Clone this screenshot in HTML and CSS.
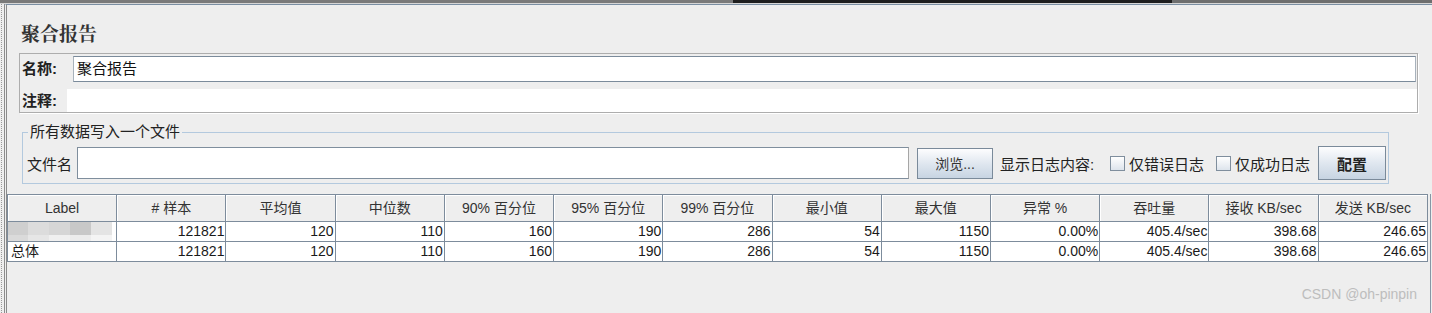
FILE: index.html
```html
<!DOCTYPE html>
<html lang="zh-CN">
<head>
  <meta charset="UTF-8">
  <meta name="viewport" content="width=device-width, initial-scale=1.0">
  <title>聚合报告</title>
  <link rel="stylesheet" href="styles.css">
</head>
<body>
  <div class="topbar"></div>
  <div class="shell">
    <div class="splitter"></div>
    <div class="panel">
      <h1 class="title">聚合报告</h1>

      <div class="namebox">
        <div class="name-row">
          <span class="lbl">名称:</span>
          <div class="field name-field">聚合报告</div>
        </div>
        <div class="note-row">
          <span class="lbl">注释:</span>
          <div class="comment"></div>
        </div>
      </div>

      <fieldset class="filebox">
        <legend>所有数据写入一个文件</legend>
        <div class="file-row">
          <span class="file-lbl">文件名</span>
          <div class="file-input"></div>
          <button class="btn browse">浏览...</button>
          <span class="log-lbl">显示日志内容:</span>
          <span class="check err"><span class="box"></span>仅错误日志</span>
          <span class="check ok"><span class="box"></span>仅成功日志</span>
          <button class="btn config">配置</button>
        </div>
      </fieldset>

      <div class="results">
        <table>
          <thead>
            <tr>
              <th>Label</th>
              <th># 样本</th>
              <th>平均值</th>
              <th>中位数</th>
              <th>90% 百分位</th>
              <th>95% 百分位</th>
              <th>99% 百分位</th>
              <th>最小值</th>
              <th>最大值</th>
              <th>异常 %</th>
              <th>吞吐量</th>
              <th>接收 KB/sec</th>
              <th>发送 KB/sec</th>
            </tr>
          </thead>
          <tbody>
            <tr>
              <td class="label-cell"><div class="blur"><span></span><span></span><span></span><span></span><span></span></div></td>
              <td>121821</td>
              <td>120</td>
              <td>110</td>
              <td>160</td>
              <td>190</td>
              <td>286</td>
              <td>54</td>
              <td>1150</td>
              <td>0.00%</td>
              <td>405.4/sec</td>
              <td>398.68</td>
              <td>246.65</td>
            </tr>
            <tr>
              <td class="label-cell">总体</td>
              <td>121821</td>
              <td>120</td>
              <td>110</td>
              <td>160</td>
              <td>190</td>
              <td>286</td>
              <td>54</td>
              <td>1150</td>
              <td>0.00%</td>
              <td>405.4/sec</td>
              <td>398.68</td>
              <td>246.65</td>
            </tr>
          </tbody>
        </table>
        <div class="watermark">CSDN @oh-pinpin</div>
      </div>
    </div>
  </div>
</body>
</html>
```

FILE: styles.css
```css
body {
  margin: 0;
  height: 313px;
  overflow: hidden;
  background: #eeeeee;
  font-family: "Liberation Sans", "Noto Sans CJK SC", sans-serif;
  color: #222;
}
.topbar {
  height: 3px;
  background: linear-gradient(to right, #7a7a7a 0 733px, #1e1e1e 733px 1172px, #6e6e6e 1172px);
  border-bottom: 1px solid #d6d6d6;
}
.shell {
  display: flex;
  height: 309px;
}
.splitter {
  flex: none;
  width: 2px;
  margin-left: 1px;
  border-left: 1px dotted #999;
}
.panel {
  flex: 1;
  min-width: 0;
  display: flex;
  flex-direction: column;
  border-top: 1px solid #7b8fa3;
  border-left: 3px double #8b8b8b;
}
.title {
  margin: 16px 0 0 14px;
  font-family: "Noto Serif CJK SC", "Noto Sans CJK SC", serif;
  font-size: 19px;
  line-height: 23px;
  font-weight: bold;
  color: #333;
}

/* name / comment */
.namebox {
  margin: 9px 0 0 12px;
  width: 1399px;
  height: 60px;
  box-sizing: border-box;
  border: 1px solid #adadad;
  box-shadow: 1px 1px 0 #fff;
  padding: 2px 0 0 2px;
}
.name-row, .note-row {
  display: flex;
  align-items: center;
}
.name-row {
  height: 26px;
}
.note-row {
  height: 23px;
  margin-top: 7px;
}
.lbl {
  flex: none;
  width: 51px;
  font-size: 15px;
  line-height: 18px;
  font-weight: bold;
}
.note-row .lbl {
  width: 45px;
}
.field {
  flex: 1;
  height: 26px;
  margin-right: 1px;
  box-sizing: border-box;
  background: #fff;
  border: 1px solid;
  border-color: #7b8b9b #a8b2bc #7b8b9b #a8b2bc;
  padding-left: 3px;
  font-size: 15px;
  line-height: 23px;
  color: #111;
}
.comment {
  flex: 1;
  height: 23px;
  background: #fff;
}

/* file box */
.filebox {
  margin: 10px 0 0 15px;
  width: 1367px;
  box-sizing: border-box;
  border: 1px solid #b3c9de;
  padding: 0 2px 3px 4px;
  min-inline-size: 0;
}
.filebox legend {
  margin-left: 1px;
  padding: 0 2px;
  font-size: 15px;
  line-height: 18px;
}
.file-row {
  display: flex;
  align-items: center;
  height: 34px;
  margin-top: 5px;
  font-size: 15px;
}
.file-lbl {
  flex: none;
  width: 50px;
}
.file-input {
  flex: none;
  width: 832px;
  height: 32px;
  box-sizing: border-box;
  background: #fff;
  border: 1px solid #7f8e9d;
  border-right-color: #a6a6a6;
}
.btn {
  flex: none;
  box-sizing: border-box;
  padding: 0;
  border: 1px solid #7a8a9a;
  border-radius: 0;
  background: linear-gradient(#fdfdfe, #dde5ee 55%, #c7d4e2);
  font-family: inherit;
  color: #222;
}
.browse {
  width: 76px;
  height: 31px;
  margin-left: 8px;
  font-size: 14px;
  color: #333;
}
.log-lbl {
  flex: none;
  width: 110px;
  margin-left: 7px;
}
.check {
  flex: none;
  display: flex;
  align-items: center;
  gap: 4px;
}
.check.err {
  width: 106px;
}
.check.ok {
  width: 102px;
}
.box {
  width: 15px;
  height: 15px;
  box-sizing: border-box;
  border: 1px solid #7f8e9d;
  background: linear-gradient(#fff, #dde4ec);
}
.config {
  width: 68px;
  height: 34px;
  font-size: 15px;
  font-weight: bold;
}

/* results table */
.results {
  position: relative;
  flex: 1;
  width: 1424px;
  margin-top: 10px;
  box-sizing: border-box;
  border-right: 1px solid #8796a5;
}
table {
  width: 1421px;
  table-layout: fixed;
  border-collapse: collapse;
  font-size: 14px;
}
th, td {
  border: 1px solid #7d8c9c;
  padding: 0 1px;
  overflow: hidden;
  white-space: nowrap;
}
th {
  height: 26px;
  background: #eeeeee;
  box-shadow: inset 1px 1px 0 #fff;
  font-weight: normal;
  color: #333;
  line-height: 26px;
}
td {
  height: 19px;
  background: #fff;
  text-align: right;
  line-height: 19px;
  color: #1a1a1a;
}
td.label-cell {
  text-align: left;
  padding-left: 3px;
}
.blur {
  display: flex;
  height: 19px;
  margin-left: -5px;
}
.blur span {
  width: 21px;
  height: 19px;
}
.blur span:nth-child(1) { width: 22px; background: linear-gradient(#cfcfcf 0 13px, #dadada 13px); }
.blur span:nth-child(2) { background: linear-gradient(#dcdcdc 0 13px, #e6e6e6 13px); }
.blur span:nth-child(3) { background: linear-gradient(#d6d6d6 0 13px, #f0f0f0 13px); }
.blur span:nth-child(4) { background: linear-gradient(#c8c8c8 0 13px, #ececec 13px); }
.blur span:nth-child(5) { background: linear-gradient(#e4e4e4 0 13px, #f4f4f4 13px); }
.watermark {
  position: absolute;
  top: 92px;
  right: 13px;
  font-size: 14px;
  line-height: 17px;
  color: #bdbdbd;
}
```
